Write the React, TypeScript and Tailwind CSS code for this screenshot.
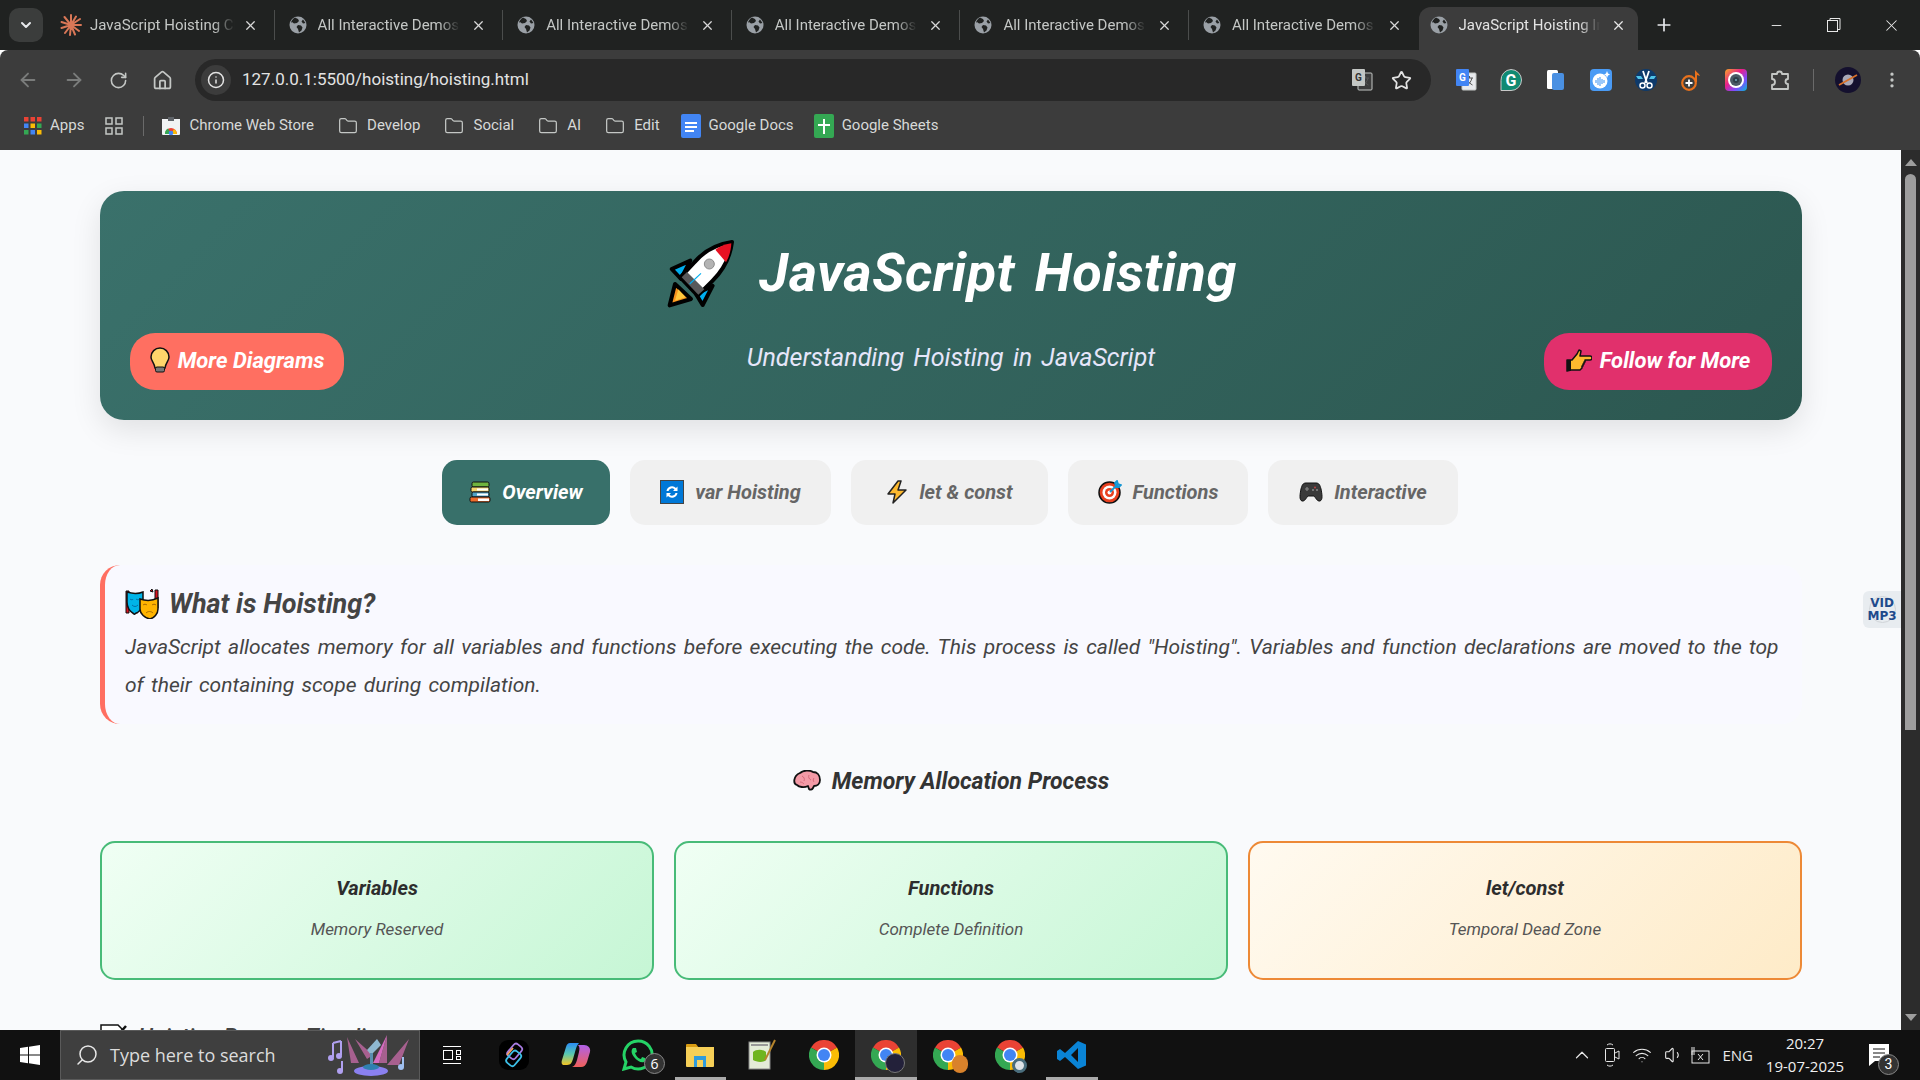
import { ArrowLeft, ArrowRight, RotateCw, Home, Info, Star, EllipsisVertical, X, Plus, Minus, ChevronDown, ChevronUp, Folder, Search, Volume1, Wifi } from 'lucide-react';

const Globe = () => (
  <svg width="18" height="18" viewBox="0 0 18 18" className="shrink-0">
    <circle cx="9" cy="9" r="8.5" fill="#9aa0a6" />
    <path d="M6 1.5 9 3l1 2-2 2-3 .5L3 6l-1 1C2 5 4 2.5 6 1.5ZM9 9l3 .5 1.5 2-1 3L10 16.500l-1-3.500-1.500-2ZM14 3.500 16.500 7 14 7.500 12.500 5.500Z" fill="#202221" />
  </svg>
);

const ClaudeMark = () => (
  <svg width="22" height="22" viewBox="0 0 22 22" stroke="#d97757" strokeWidth="2" strokeLinecap="round" className="shrink-0">
    <path d="M11 11 11 1M11 11 16 2.500M11 11 20 5M11 11 21 11M11 11 19 17M11 11 15 20.500M11 11 10 21M11 11 5 19M11 11 1.500 14M11 11 1.500 8M11 11 4.500 3" />
  </svg>
);

const tabs = ['All Interactive Demos', 'All Interactive Demos', 'All Interactive Demos', 'All Interactive Demos', 'All Interactive Demos'];

function BrowserTab({ title, icon, last, gap }: { title: string; icon: React.ReactNode; last?: boolean; gap: string }) {
  return (
    <div className={`w-[228.6px] h-[30px] shrink-0 flex items-center pl-[14px] pr-[16px] ${gap} ${last ? '' : 'border-r border-[#4b4d4c]'}`}>
      {icon}
      <span className="flex-1 overflow-hidden whitespace-nowrap text-[15px] text-[#c4c7c5] [mask-image:linear-gradient(to_right,black_85%,transparent)]">{title}</span>
      <X size={15} strokeWidth={2} className="text-[#d8d8d8] shrink-0" />
    </div>
  );
}

const AppsIcon = () => (
  <svg width="18" height="18" viewBox="0 0 18 18" className="shrink-0">
    {['#ea4335', '#ea4335', '#ea4335', '#4285f4', '#fbbc05', '#34a853', '#34a853', '#4285f4', '#fbbc05'].map((c, i) => (
      <rect key={i} x={(i % 3) * 6.500} y={Math.floor(i / 3) * 6.500} width="4.500" height="4.500" fill={c} />
    ))}
  </svg>
);

const GridIcon = () => (
  <svg width="18" height="18" viewBox="0 0 18 18" fill="none" stroke="#c4c7c5" strokeWidth="1.500">
    <rect x="1" y="1" width="6" height="6" /><rect x="11" y="1" width="6" height="6" />
    <rect x="1" y="11" width="6" height="6" /><rect x="11" y="11" width="6" height="6" />
  </svg>
);

const StoreIcon = () => (
  <svg width="20" height="20" viewBox="0 0 20 20" className="shrink-0">
    <path d="M1 3h18v15a1 1 0 0 1-1 1H2a1 1 0 0 1-1-1Z" fill="#f1f3f4" />
    <rect x="7" y="1" width="6" height="4" fill="#5f6368" />
    <path d="M4 18a6 6 0 0 1 12 0Z" fill="#ea4335" />
    <path d="M10 18 7 12.500A6 6 0 0 0 4 18Z" fill="#34a853" />
    <path d="M10 18 16 18A6 6 0 0 0 13 13Z" fill="#fbbc05" />
    <circle cx="10" cy="17" r="2.300" fill="#4285f4" />
  </svg>
);

const DocsIcon = () => (
  <svg width="20" height="24" viewBox="0 0 20 24" className="shrink-0">
    <rect width="20" height="24" rx="2" fill="#4285f4" />
    <path d="M4 8h12v2H4ZM4 12h12v2H4ZM4 16h9v2H4Z" fill="#fff" />
  </svg>
);

const SheetsIcon = () => (
  <svg width="20" height="24" viewBox="0 0 20 24" className="shrink-0">
    <rect width="20" height="24" rx="2" fill="#34a853" />
    <path d="M9 5h2v5h5v2h-5v8H9v-8H4v-2h5Z" fill="#fff" />
  </svg>
);

const bookmarkFolders = ['Develop', 'Social', 'AI', 'Edit'];

const TranslateIcon = ({ big }: { big?: boolean }) => (
  <svg width="22" height="24" viewBox="0 0 22 24" className="shrink-0">
    <rect x="7" y="5" width="14" height="17" rx="1" fill={big ? '#e8eaed' : '#3c3c3c'} stroke="#c4c7c5" />
    <path d="M11 10h7M14.500 8v2M17 10c-1 4-3 6-5 7M12.500 12c1 2 3 4 5 5" stroke="#555" fill="none" />
    <rect x="1" y="1" width="13" height="17" rx="1" fill={big ? '#4285f4' : '#c4c7c5'} />
    <text x="7.500" y="13" textAnchor="middle" fontSize="10" fontWeight="700" fontFamily="Roboto, sans-serif" fill={big ? '#fff' : '#333'}>G</text>
  </svg>
);

const extensions = [
  <TranslateIcon big key="t" />,
  <svg key="g" width="22" height="22" viewBox="0 0 22 22"><path d="M11 .5a10.500 10.500 0 1 1 0 21H1v-10A10.500 10.500 0 0 1 11 .5Z" fill="#0f8a72" stroke="#c8c8c8" /><text x="11" y="17" textAnchor="middle" fontSize="16" fontWeight="700" fontFamily="Roboto, sans-serif" fill="#fff">G</text></svg>,
  <svg key="f" width="20" height="22" viewBox="0 0 20 22"><rect x="1" y="1" width="11" height="19" rx="1.500" fill="#fff" /><rect x="6" y="4" width="12" height="17" rx="2" fill="#4a90e2" /></svg>,
  <svg key="w" width="22" height="22" viewBox="0 0 22 22"><rect width="22" height="22" rx="4" fill="#4a9bf5" /><circle cx="10" cy="12" r="7.500" fill="#fff" /><path d="M6 11v3M8 9v7M10 8v9M12 10v5M14 11v3" stroke="#4a9bf5" strokeWidth="1.100" /><path d="m17 2 1 2.500 2 1-2 1-1 2.500-1-2.500-2-1 2-1Z" fill="#fff" /></svg>,
  <svg key="s" width="22" height="22" viewBox="0 0 22 22"><circle cx="11" cy="11" r="11" fill="#0e3a6b" /><path d="M1 7h5l2 3H3ZM21 7h-5l-2 3h5Z" fill="#4fc3e8" /><path d="M8 2l4 12M14 2l-4 12" stroke="#fff" strokeWidth="1.800" /><circle cx="7.500" cy="16.500" r="2.500" fill="none" stroke="#fff" strokeWidth="1.500" /><circle cx="14.500" cy="16.500" r="2.500" fill="none" stroke="#fff" strokeWidth="1.500" /></svg>,
  <svg key="m" width="20" height="22" viewBox="0 0 20 22"><circle cx="8" cy="14" r="6.800" fill="none" stroke="#e8711c" strokeWidth="2.200" /><path d="M8 10.500v7M4.500 14h7" stroke="#fff" strokeWidth="1.800" /><path d="M14 13V1c1 2 4 3 5 6l-3-1v7Z" fill="#e8711c" /></svg>,
  <svg key="c" width="22" height="22" viewBox="0 0 22 22"><defs><linearGradient id="cam" x1="0" y1="0" x2="1" y2="1"><stop offset="0" stopColor="#f9a825" /><stop offset=".4" stopColor="#e91e8c" /><stop offset=".7" stopColor="#7c4dff" /><stop offset="1" stopColor="#00bcd4" /></linearGradient></defs><rect width="22" height="22" rx="4" fill="url(#cam)" /><circle cx="11" cy="11" r="8" fill="#fff" /><circle cx="11" cy="11" r="6" fill="#4a5a66" /><circle cx="11" cy="11" r="3" fill="#2f3e49" /><circle cx="11" cy="11" r="1" fill="#7ab" /></svg>,
];

const Rocket = () => (
  <svg width="64" height="64" viewBox="24 18 192 192" className="shrink-0 overflow-visible" strokeLinejoin="round">
    <path d="M26 214 42 150l48 45Z" fill="#f7931e" stroke="#000" strokeWidth="12" />
    <path d="M42 200 52 166l22 24Z" fill="#ffc83d" />
    <path d="M32 105 88 80 60 135Z" fill="#00aeef" stroke="#000" strokeWidth="12" />
    <path d="M125 213 155 155 105 180Z" fill="#00aeef" stroke="#000" strokeWidth="12" />
    <path d="M213 24C170 30 130 50 100 85L58 130l52 55 45-45C190 105 208 65 213 24Z" fill="#fff" stroke="#000" strokeWidth="12" />
    <path d="M211 28C190 31 175 38 163 47l32 38C205 68 210 48 211 28Z" fill="#e81123" />
    <path d="M62 130 78 114l52 52-18 16Z" fill="#58595b" />
    <circle cx="145" cy="90" r="15" fill="#b3b3b3" stroke="#8c8c8c" strokeWidth="3" />
    <path d="M120 118 86 150" stroke="#00aeef" strokeWidth="3.500" />
  </svg>
);

const Bulb = () => (
  <svg width="20" height="26" viewBox="0 0 20 26" className="shrink-0">
    <path d="M10 1a9 9 0 0 0-9 9c0 4 3 5 4 11h10c1-6 4-7 4-11a9 9 0 0 0-9-9Z" fill="#ffd56b" stroke="#111" strokeWidth="1.500" />
    <rect x="5.500" y="20" width="9" height="5" rx="1.500" fill="#777" stroke="#111" />
  </svg>
);

const PointHand = () => (
  <svg width="26" height="24" viewBox="0 0 26 24" className="shrink-0">
    <path d="M1 12h5l5-6 2-4 2 1-1 5h10a1.500 1.500 0 0 1 0 4h-5v2h-1v2h-1v2h-1v2l-2 2H5l-4 1Z" fill="#fdb92e" stroke="#111" strokeWidth="1.500" strokeLinejoin="round" />
    <path d="M1 12h4v11H1Z" fill="#111" />
  </svg>
);

const Books = () => (
  <svg width="22" height="22" viewBox="0 0 22 22" className="shrink-0">
    <rect x="3" y="1" width="17" height="5" rx="1.500" fill="#6fb43f" stroke="#111" />
    <rect x="2" y="6" width="18" height="5" rx="1.500" fill="#f5d76e" stroke="#111" />
    <rect x="3" y="11" width="17" height="5" rx="1.500" fill="#4fa3c7" stroke="#111" />
    <rect x="1" y="16" width="20" height="5" rx="1.500" fill="#ee6c2b" stroke="#111" />
    <rect x="9" y="17.500" width="11" height="2.500" fill="#fff" /><rect x="8" y="7.500" width="11" height="2" fill="#fff" /><rect x="8" y="12.500" width="11" height="2" fill="#fff" />
  </svg>
);

const Cycle = () => (
  <svg width="24" height="24" viewBox="0 0 24 24" className="shrink-0">
    <rect x="0.500" y="0.500" width="23" height="23" fill="#0078d7" stroke="#444" />
    <path d="M6.500 11a5.500 5.500 0 0 1 9.500-3l1.500-1.500V11H13l1.500-1.500A3.500 3.500 0 0 0 8.500 11ZM17.500 13a5.500 5.500 0 0 1-9.500 3l-1.500 1.500V13H11l-1.500 1.500A3.500 3.500 0 0 0 15.500 13Z" fill="#fff" />
  </svg>
);

const Bolt = () => (
  <svg width="22" height="24" viewBox="0 0 22 24" className="shrink-0">
    <path d="M12 1 2 14h7l-2 9 13-13h-8l3-9Z" fill="#fdb92e" stroke="#222" strokeWidth="1.500" strokeLinejoin="round" />
  </svg>
);

const Target = () => (
  <svg width="24" height="24" viewBox="0 0 24 24" className="shrink-0">
    <circle cx="11.500" cy="12.500" r="10.500" fill="#e8401f" stroke="#111" strokeWidth="1.500" />
    <circle cx="11.500" cy="12.500" r="7" fill="#fff" />
    <circle cx="11.500" cy="12.500" r="4.500" fill="#e8401f" />
    <circle cx="11.500" cy="12.500" r="2" fill="#fff" />
    <path d="m12 12 8-8M17 3l2-2 1 3 3 1-2 2-3-1Z" stroke="#1496d4" strokeWidth="1.800" fill="#29abe2" />
  </svg>
);

const Gamepad = () => (
  <svg width="24" height="22" viewBox="0 0 24 22" className="shrink-0">
    <path d="M7 2h10c3 0 4 2 5 6 1 5 2 11-1 12-3 .5-4-3-6-5H9c-2 2-3 5.500-6 5-3-1-2-7-1-12 1-4 2-6 5-6Z" fill="#3a3a3a" stroke="#111" />
    <path d="M6 8h4M8 6v4" stroke="#888" strokeWidth="1.200" />
    <circle cx="16" cy="6.500" r="1" fill="#b44" /><circle cx="18" cy="9" r="1" fill="#888" /><circle cx="14" cy="9" r="1" fill="#888" />
  </svg>
);

const Masks = () => (
  <svg width="34" height="30" viewBox="0 0 34 30" className="shrink-0">
    <path d="M1 2h3v22H1ZM30 1h3v18h-3ZM25 2l2-2 1 3Z" fill="#d8121f" stroke="#111" />
    <path d="M2 3c6 2 11 2 16 0v10c0 6-3 9-6 11-1-1-2 2-3 1-5-3-7-8-7-12Z" fill="#00b4e8" stroke="#111" strokeWidth="1.500" />
    <path d="M5 10c1 1 3 1 3 0M11 10c1 1 3 1 3 0M7 16c2 2 4 2 6 0" stroke="#0070a8" fill="none" />
    <path d="M15 10c6 2 12 2 18-1v11c0 5-4 9-8 10-5-1-10-5-10-10Z" fill="#ffb400" stroke="#111" strokeWidth="1.500" />
    <path d="M18 16c1-1 3-1 4 0M27 16c1-1 3-1 4 0M21 24c2-2 5-2 7 0" stroke="#a86a00" fill="none" />
  </svg>
);

const Brain = () => (
  <svg width="28" height="24" viewBox="0 0 28 24" className="shrink-0">
    <path d="M7 3c3-3 10-3 13-1 4 0 7 3 7 8 0 4-3 6-6 6l-1 2c-1 2-3 2-4 1l-1-3c-4 2-9 1-11-1-4-1-4-9 3-12Z" fill="#f49aa6" stroke="#111" strokeWidth="1.800" strokeLinejoin="round" />
    <path d="M9 6c2 1 3 3 2 5M16 5c-1 2 0 4 2 5M21 8c-1 1-1 3 0 4M7 12c2 0 3 1 4 2" stroke="#d66a7a" fill="none" />
  </svg>
);

const Memo = () => (
  <svg width="27" height="30" viewBox="0 0 27 30" className="shrink-0">
    <path d="M1 1h17l5 5v23H1Z" fill="#fff" stroke="#111" strokeWidth="1.500" />
    <path d="M26 2l-9 10" stroke="#111" strokeWidth="2.500" />
  </svg>
);

const PuzzleOutline = () => (
  <svg width="22" height="22" viewBox="0 0 22 22" fill="none" stroke="#c4c7c5" strokeWidth="1.800" strokeLinejoin="round">
    <path d="M2 5h5a2.500 2.500 0 0 1 5 0h6v5a2.500 2.500 0 0 0 0 5v5H2v-4a3 3 0 0 0 0-6Z" />
  </svg>
);

const pageTabs = [
  { label: 'Overview', icon: <Books />, width: 'w-[168px]', active: true },
  { label: 'var Hoisting', icon: <Cycle />, width: 'w-[201px]', active: false },
  { label: 'let & const', icon: <Bolt />, width: 'w-[197px]', active: false },
  { label: 'Functions', icon: <Target />, width: 'w-[180px]', active: false },
  { label: 'Interactive', icon: <Gamepad />, width: 'w-[190px]', active: false },
];

const cards = [
  { title: 'Variables', sub: 'Memory Reserved', tone: 'bg-[linear-gradient(135deg,#f0fff4,#c6f6d5)] border-[#48bb78]' },
  { title: 'Functions', sub: 'Complete Definition', tone: 'bg-[linear-gradient(135deg,#f0fff4,#c6f6d5)] border-[#48bb78]' },
  { title: 'let/const', sub: 'Temporal Dead Zone', tone: 'bg-[linear-gradient(135deg,#fffaf0,#feebc8)] border-[#ed8936]' },
];

const WindowsLogo = () => (
  <svg width="20" height="20" viewBox="0 0 20 20" fill="#fff">
    <path d="M0 3l8-1.200V9.500H0ZM9 1.700 20 0v9.500H9ZM0 10.500h8v7.700L0 17ZM9 10.500h11V20L9 18.300Z" />
  </svg>
);

const StageArt = () => (
  <svg width="84" height="44" viewBox="0 0 84 44" className="shrink-0">
    <path d="M20 4 32 30H24ZM60 2 52 30H60ZM82 6 60 32H72ZM40 26 28 6l18 16Z" fill="#a7608f" />
    <path d="M60 2 52 30H46Z" fill="#d66cc0" />
    <path d="M50 6 54 12 44 22 40 17Z" fill="#8fb8d0" />
    <rect x="43" y="20" width="3" height="16" fill="#5a8fb0" />
    <ellipse cx="44" cy="38" rx="17" ry="5" fill="#8a80f0" />
    <ellipse cx="44" cy="34" rx="8" ry="3" fill="#2f80b0" />
    <path d="M6 10v14M14 8v14M6 10l8-2" stroke="#b0a0f0" strokeWidth="2" fill="none" />
    <circle cx="4" cy="25" r="3" fill="#b0a0f0" /><circle cx="12" cy="23" r="3" fill="#b0a0f0" />
    <path d="M15 28v10" stroke="#b0a0f0" strokeWidth="2" /><circle cx="13" cy="38" r="3" fill="#b0a0f0" />
    <path d="M76 24v10" stroke="#a0c0f0" strokeWidth="2" /><circle cx="74" cy="34" r="3" fill="#a0c0f0" />
  </svg>
);

const ChromeLogo = () => (
  <svg width="30" height="30" viewBox="0 0 30 30">
    <path d="M15 15 2 7.500A15 15 0 0 1 28 7.500Z" fill="#ea4335" />
    <path d="M15 15 2 7.500A15 15 0 0 0 15 30Z" fill="#34a853" />
    <path d="M15 15 28 7.500A15 15 0 0 1 15 30Z" fill="#fbbc05" />
    <circle cx="15" cy="15" r="7.500" fill="#fff" /><circle cx="15" cy="15" r="6" fill="#4285f4" />
  </svg>
);

const taskApps = [
  { key: 'link', node: <svg width="30" height="30" viewBox="0 0 30 30"><rect width="30" height="30" rx="9" fill="#000" /><rect x="11" y="4" width="10" height="15" rx="3" transform="rotate(40 16 11)" fill="none" stroke="#a77be0" strokeWidth="1.800" /><rect x="10" y="11" width="10" height="15" rx="3" transform="rotate(40 15 18)" fill="none" stroke="#3cc0e8" strokeWidth="1.800" /><path d="m8 15 6-7" stroke="#f4a261" strokeWidth="1.800" /></svg> },
  { key: 'copilot', node: <svg width="30" height="26" viewBox="0 0 30 26"><defs><linearGradient id="cp" x1="0" y1="0" x2="0" y2="1"><stop offset="0" stopColor="#2a8cf5" /><stop offset=".5" stopColor="#58c8b0" /><stop offset="1" stopColor="#f5c623" /></linearGradient><linearGradient id="cq" x1="0" y1="0" x2="0" y2="1"><stop offset="0" stopColor="#b060e8" /><stop offset="1" stopColor="#f0605a" /></linearGradient></defs><path d="M9 1h9c-2 2-3 5-4 9l-2 7c-1 3-2 6-6 6H3c-2 0-3-2-2-5L5 5c1-3 2-4 4-4Z" fill="url(#cp)" /><path d="M17 3h6c4 0 7 3 6 7l-3 10c-1 3-3 5-6 5h-9c3-1 4-4 5-7l2-8c.5-3 1-5-1-7Z" fill="url(#cq)" /></svg> },
  { key: 'whatsapp', node: <span className="relative flex"><svg width="32" height="32" viewBox="0 0 32 32"><path d="M16 2a14 14 0 0 0-12 21L2 30l7-2A14 14 0 1 0 16 2Z" fill="none" stroke="#25d366" strokeWidth="3" /><path d="M11 9c-2 2-2 5 1 9s7 6 10 5c2-1 2-3 1-4l-3-1-1 2c-2 0-5-3-6-6l2-1-1-4Z" fill="#25d366" /></svg><span className="absolute -right-[11px] -bottom-[3px] w-[21px] h-[21px] rounded-full bg-[#333] border border-[#888] text-white text-[14px] leading-[19px] text-center font-['Open_Sans',sans-serif]">6</span></span> },
  { key: 'files', node: <svg width="28" height="24" viewBox="0 0 28 24"><path d="M0 2a1 1 0 0 1 1-1h9l3 4H0Z" fill="#d89b12" /><path d="M0 4h28v19a1 1 0 0 1-1 1H1a1 1 0 0 1-1-1Z" fill="#f6cf57" /><path d="M8 13h12v11h-3v-7h-6v7H8Z" fill="#2f9bdc" /></svg> },
  { key: 'notepad', node: <svg width="28" height="32" viewBox="0 0 28 32"><rect x="1" y="3" width="21" height="27" fill="#e4ecd8" stroke="#888" /><path d="M3 6h17" stroke="#999" strokeWidth="2" /><path d="M5 13c3-3 10-3 13 0v8c-3 3-10 2-13 0Z" fill="#6fb51f" /><path d="M27 1 17 21" stroke="#b5842c" strokeWidth="2" /></svg> },
];

export default function App() {
  return (
    <div className="w-[1920px] h-[1080px] overflow-hidden flex flex-col font-['Roboto',sans-serif]">
      {/* tab strip */}
      <div className="h-[50px] bg-[#202221] flex shrink-0">
        <div className="w-[34px] h-[34px] ml-[9px] mt-[8px] rounded-[10px] bg-[#3b3d3c] flex items-center justify-center shrink-0">
          <ChevronDown size={16} strokeWidth={3} className="text-[#e8eaed]" />
        </div>
        <div className="flex items-center ml-[3px] h-[50px]">
          <BrowserTab title="JavaScript Hoisting Cheatsheet" icon={<ClaudeMark />} gap="gap-[8px]" />
          {tabs.map((t, i) => (
            <BrowserTab key={i} title={t} icon={<Globe />} gap="gap-[11px]" last={i === tabs.length - 1} />
          ))}
        </div>
        <div className="w-[219px] h-[43px] mt-[7px] shrink-0 ml-[1px] bg-[#3c3c3c] rounded-t-[12px] flex items-center pl-[11px] pr-[12px] pb-[7px] gap-[11px]">
          <Globe />
          <span className="flex-1 overflow-hidden whitespace-nowrap text-[15px] text-[#e3e3e3] [mask-image:linear-gradient(to_right,black_85%,transparent)]">JavaScript Hoisting Interactive</span>
          <X size={15} strokeWidth={2} className="text-[#e8e8e8] shrink-0" />
        </div>
        <Plus size={20} className="text-[#e8eaed] ml-[16px] mt-[15px]" />
        <div className="ml-auto flex items-center h-[50px] text-[#e8e8e8]">
          <div className="w-[57px] flex justify-center"><Minus size={15} strokeWidth={1.500} /></div>
          <div className="w-[57px] flex justify-center">
            <svg width="14" height="14" viewBox="0 0 14 14" fill="none" stroke="currentColor"><rect x="0.500" y="2.500" width="10" height="11" /><path d="M3 2.500V.5h10v11h-2.500" /></svg>
          </div>
          <div className="w-[58px] flex justify-center"><X size={19} strokeWidth={1.300} /></div>
        </div>
      </div>

      {/* address + bookmarks */}
      <div className="h-[100px] bg-[#3c3c3c] shrink-0 rounded-t-[8px] flex flex-col">
        <div className="h-[42px] mt-[9px] flex items-center">
          <div className="flex items-center text-[#c4c7c5] pl-[17px] gap-[24px] w-[195px] shrink-0">
            <ArrowLeft size={22} className="text-[#7a7c7b] shrink-0" />
            <ArrowRight size={22} className="text-[#7a7c7b] shrink-0" />
            <RotateCw size={19} className="shrink-0" />
            <Home size={21} className="shrink-0" />
          </div>
          <div className="w-[1236px] h-[42px] rounded-full bg-[#282828] flex items-center pl-[6px] pr-[19px] shrink-0">
            <div className="w-[30px] h-[30px] rounded-full bg-[#3c3c3c] flex items-center justify-center">
              <Info size={18} className="text-[#e3e3e3]" />
            </div>
            <span className="ml-[11px] text-[17px] text-[#e3e3e3] flex-1">127.0.0.1:5500/hoisting/hoisting.html</span>
            <TranslateIcon />
            <Star size={21} className="ml-[18px] text-[#e3e3e3]" />
          </div>
          <div className="flex items-center ml-[12px]">
            {extensions.map((e, i) => (
              <div key={i} className="w-[45px] flex justify-center">{e}</div>
            ))}
            <div className="w-[45px] flex justify-center"><PuzzleOutline /></div>
            <div className="w-px h-[22px] bg-[#6a6a6a] ml-[10px]" />
            <div className="ml-[21px] w-[26px] h-[26px] rounded-full bg-[#14102e] flex items-center justify-center">
              <svg width="20" height="20" viewBox="0 0 20 20"><circle cx="10" cy="10" r="5.500" fill="#a8a8b8" /><path d="M1 15 19 5" stroke="#d8702a" strokeWidth="1.800" /></svg>
            </div>
            <EllipsisVertical size={20} className="ml-[21px] text-[#c4c7c5]" />
          </div>
        </div>
        <div className="h-[49px] flex items-center text-[15px] text-[#d7d9d8] pl-[24px]">
          <AppsIcon />
          <span className="ml-[8px]">Apps</span>
          <span className="ml-[21px]"><GridIcon /></span>
          <div className="w-px h-[20px] bg-[#6a6a6a] ml-[20px]" />
          <span className="ml-[17px]"><StoreIcon /></span>
          <span className="ml-[8px]">Chrome Web Store</span>
          {bookmarkFolders.map((f) => (
            <div key={f} className="flex items-center ml-[24px] gap-[9px]">
              <Folder size={20} strokeWidth={1.500} className="text-[#c4c7c5]" />
              <span>{f}</span>
            </div>
          ))}
          <span className="ml-[21px]"><DocsIcon /></span>
          <span className="ml-[8px]">Google Docs</span>
          <span className="ml-[20px]"><SheetsIcon /></span>
          <span className="ml-[8px]">Google Sheets</span>
        </div>
      </div>

      {/* page */}
      <div className="h-[880px] flex shrink-0 relative overflow-hidden bg-[#f9fafc] font-['Roboto',sans-serif] italic">
        <div className="w-[1901px] shrink-0 pl-[100px] pr-[99px] pt-[41px]">
          <header className="h-[229px] rounded-[24px] bg-[linear-gradient(135deg,#3a716b,#2c5750)] shadow-[0_10px_30px_rgba(0,0,0,0.1)] pt-[42px] px-[30px]">
            <div className="h-[78px] pl-[4px] flex items-center justify-center gap-[26px]">
              <Rocket />
              <h1 className="text-[54px] font-bold text-white tracking-[0.5px] [word-spacing:6px]">JavaScript Hoisting</h1>
            </div>
            <div className="mt-[22px] grid grid-cols-[1fr_auto_1fr] items-start">
              <a className="justify-self-start h-[57px] w-[214px] rounded-[25px] bg-[#ff6f61] pb-[3px] flex items-center justify-center gap-[8px] text-white text-[22px] font-bold">
                <Bulb />
                More Diagrams
              </a>
              <p className="pt-[6px] text-[25px] text-[#e6e6fa] [word-spacing:3px]">Understanding Hoisting in JavaScript</p>
              <a className="justify-self-end h-[57px] w-[228px] rounded-[25px] bg-[#e1306c] pb-[3px] flex items-center justify-center gap-[8px] text-white text-[22px] font-bold">
                <PointHand />
                Follow for More
              </a>
            </div>
          </header>

          <nav className="mt-[40px] pr-[2px] flex justify-center gap-[20px]">
            {pageTabs.map((t) => (
              <button key={t.label} className={`${t.width} h-[65px] pb-[2px] rounded-[15px] flex items-center justify-center gap-[11px] text-[20px] font-bold italic ${t.active ? 'bg-[#38706a] text-white' : 'bg-[#f0f0f0] text-[#666]'}`}>
                {t.icon}
                {t.label}
              </button>
            ))}
          </nav>

          <section className="mt-[40px] h-[159px] rounded-[20px] border-l-[5px] border-[#ff6f61] bg-[#f9f9ff] pl-[20px] pt-[20px] pr-[20px]">
            <h2 className="h-[38px] flex items-center gap-[10px] text-[27px] font-bold text-[#444]">
              <Masks />
              What is Hoisting?
            </h2>
            <p className="mt-[5px] text-[21px] leading-[38px] text-[#444] [word-spacing:2.2px]">
              JavaScript allocates memory for all variables and functions before executing the code. This process is called "Hoisting". Variables and function declarations are moved to the top of their containing scope during compilation.
            </p>
          </section>

          <h3 className="mt-[38px] h-[40px] flex items-center justify-center gap-[11px] text-[23px] font-bold text-[#333]">
            <Brain />
            Memory Allocation Process
          </h3>

          <div className="mt-[39px] grid grid-cols-3 gap-[20px]">
            {cards.map((c) => (
              <div key={c.title} className={`h-[139px] rounded-[15px] border-2 ${c.tone} flex flex-col items-center pt-[26px]`}>
                <div className="h-[38px] flex items-center text-[20px] font-bold text-[#2d2d2d]">{c.title}</div>
                <div className="mt-[8px] h-[30px] flex items-center text-[17px] text-[#555]">{c.sub}</div>
              </div>
            ))}
          </div>

          <h3 className="mt-[44px] flex items-start gap-[11px] text-[22px] leading-[26px] font-medium text-[#444]">
            <Memo />
            Hoisting Process Timeline
          </h3>
        </div>

        {/* scrollbar */}
        <div className="w-[19px] bg-[#2c2c2c] shrink-0 flex flex-col items-center pt-[9px] not-italic">
          <div className="w-0 h-0 border-x-[6px] border-x-transparent border-b-[7px] border-b-[#9e9e9e]" />
          <div className="w-[11px] h-[556px] mt-[8px] rounded-t-full bg-[#9e9e9e]" />
          <div className="mt-auto mb-[9px] w-0 h-0 border-x-[6px] border-x-transparent border-t-[7px] border-t-[#9e9e9e]" />
        </div>

        <div className="absolute right-[19px] top-[441px] w-[38px] h-[37px] rounded-l-[6px] bg-[#e8ecf0] flex items-center justify-center not-italic">
          <span className="w-[27px] h-[27px] rounded-full border border-[#d0d4d8] flex items-center justify-center text-[12px] leading-[13px] font-bold text-center text-[#1e4a8c] font-['DejaVu_Sans',sans-serif]">VID<br />MP3</span>
        </div>
      </div>

      {/* taskbar */}
      <div className="h-[50px] bg-[#111111] shrink-0 flex items-center">
        <div className="w-[60px] flex justify-center shrink-0"><WindowsLogo /></div>
        <div className="w-[360px] h-[50px] bg-[#3f3f3f] border border-[#5a5a5a] flex items-center pl-[14px] pr-[8px] shrink-0">
          <Search size={24} strokeWidth={1.500} className="text-[#e8e8e8] -scale-x-100" />
          <span className="ml-[11px] text-[18px] text-[#dcdcdc] flex-1 font-['Open_Sans',sans-serif]">Type here to search</span>
          <StageArt />
        </div>
        <div className="w-[63px] flex justify-center shrink-0">
          <svg width="20" height="20" viewBox="0 0 20 20" fill="none" stroke="#fff"><path d="M1 1.500h18M1 18.500h18" /><rect x="1.500" y="5.500" width="9" height="9" /><rect x="14.500" y="5.500" width="4" height="4" /><rect x="14.500" y="11.500" width="4" height="3" /></svg>
        </div>
        {taskApps.map((a, i) => (
          <div key={a.key} className="w-[62px] h-[50px] flex items-center justify-center relative shrink-0">
            {a.node}
            {i === 3 && <div className="absolute bottom-0 left-[6px] right-[5px] h-[3px] bg-[#aaaaaa]" />}
          </div>
        ))}
        <div className="w-[62px] h-[50px] flex items-center justify-center shrink-0"><ChromeLogo /></div>
        <div className="w-[62px] h-[50px] flex items-center justify-center relative bg-[#2e2e2e] shrink-0">
          <ChromeLogo />
          <span className="absolute right-[12px] bottom-[7px] w-[20px] h-[20px] rounded-full bg-[#23213a] border border-[#777]" />
          <div className="absolute bottom-0 inset-x-0 h-[3px] bg-[#aaaaaa]" />
        </div>
        <div className="w-[62px] h-[50px] flex items-center justify-center relative shrink-0">
          <ChromeLogo />
          <span className="absolute right-[11px] bottom-[7px] w-[16px] h-[18px] rounded-full bg-[#d9822b]" />
        </div>
        <div className="w-[62px] h-[50px] flex items-center justify-center relative shrink-0">
          <ChromeLogo />
          <span className="absolute right-[14px] bottom-[7px] w-[15px] h-[15px] rounded-full bg-[#dfe3e6] border-[3px] border-[#4a6d7c]" />
        </div>
        <div className="w-[62px] h-[50px] flex items-center justify-center relative shrink-0">
          <svg width="30" height="30" viewBox="0 0 30 30"><path d="M21 1 29 4.500v21L21 29 8 17 3 21l-3-2V11l3-2 5 4ZM21 8l-7 7 7 7Z" fill="#0a84d6" /></svg>
          <div className="absolute bottom-0 left-[5px] right-[5px] h-[3px] bg-[#aaaaaa]" />
        </div>
        <div className="ml-auto flex items-center text-white">
          <ChevronUp size={22} strokeWidth={1.300} className="text-[#e8e8e8] shrink-0" />
          <svg width="16" height="26" viewBox="0 0 16 26" fill="none" stroke="#e8e8e8" className="ml-[11px] shrink-0"><rect x="1.500" y="6.500" width="9" height="13" rx="1" /><path d="m11 11 4-2v8l-4-2M3 3c2-1.500 4-1.500 6 0M3 23c2 1.500 4 1.500 6 0" /></svg>
          <Wifi size={20} strokeWidth={1.300} className="ml-[12px] text-[#e8e8e8]" />
          <Volume1 size={20} strokeWidth={1.300} className="ml-[12px] text-[#e8e8e8]" />
          <svg width="20" height="24" viewBox="0 0 20 24" fill="none" stroke="#e8e8e8" className="ml-[6px] shrink-0"><path d="M2 4v8M4 4v8" /><rect x="2" y="8" width="17" height="12" /><path d="m8 11 5 6M13 11l-5 6" /></svg>
          <span className="ml-[12px] text-[15px] text-[#e8e8e8] font-['Open_Sans',sans-serif]">ENG</span>
          <div className="ml-[9px] w-[86px] text-center text-[15px] leading-[23px] text-[#f0f0f0] font-['Open_Sans',sans-serif]">
            <div>20:27</div>
            <div>19-07-2025</div>
          </div>
          <div className="w-[72px] pr-[10px] flex justify-center relative">
            <svg width="20" height="22" viewBox="0 0 20 22"><path d="M0 0h20v17H6l-6 5Z" fill="#fff" /><path d="M4 5h12M4 9h12M4 13h7" stroke="#111" /></svg>
            <span className="absolute left-[30px] top-[10px] w-[21px] h-[21px] rounded-full bg-[#333] border border-[#888] text-white text-[14px] leading-[19px] text-center">3</span>
          </div>
        </div>
      </div>
    </div>
  );
}
